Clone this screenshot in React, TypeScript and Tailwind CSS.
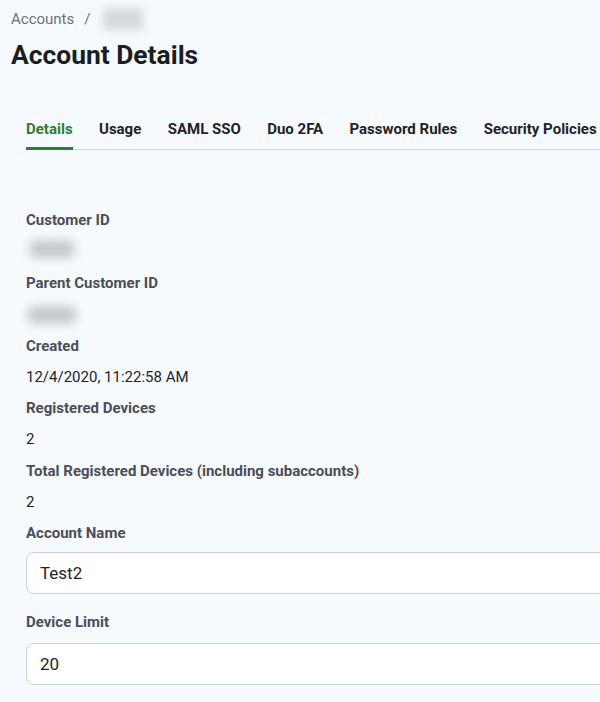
import React from "react";

const tabs = ["Details", "Usage", "SAML SSO", "Duo 2FA", "Password Rules", "Security Policies"];

const Blur = ({ w }: { w: string }) => (
  <div className={`${w} h-[28px] flex items-center justify-center`}>
    <div className="h-[18px] w-[85%] rounded-[6px] bg-[#c6c9cd] blur-[5px]" />
  </div>
);

const Label = ({ children }: { children: React.ReactNode }) => (
  <div className="h-[31.3px] flex items-center text-[15px] font-bold text-[#4a4f56]">{children}</div>
);

const Value = ({ children }: { children: React.ReactNode }) => (
  <div className="h-[31.3px] flex items-center text-[15px] text-[#212529]">{children}</div>
);

export default function App() {
  return (
    <div
      className="min-h-[702px] w-[600px] overflow-hidden bg-[#f6f9fe]"
      style={{ fontFamily: "Roboto, 'Noto Sans', sans-serif" }}
    >
      <div className="pl-[11px] pt-[6px]">
        <div className="flex items-center h-[26px] text-[15px] text-[#6c7278]">
          <span>Accounts</span>
          <span className="ml-[10px]">/</span>
          <div className="ml-[10px] w-[46px] h-[30px] flex items-center justify-center">
            <div className="h-[22px] w-[40px] bg-[#d6d9dd] blur-[4px]" />
          </div>
        </div>
        <h1 className="mt-[7px] text-[26.4px] font-bold leading-[32px] text-[#1b1e21]">Account Details</h1>
      </div>

      <div className="ml-[26px] mt-[49px] flex gap-[26.4px] border-b border-[#d3d6da] w-[600px]">
        {tabs.map((t, i) => (
          <div key={t} className="flex flex-col shrink-0">
            <span
              className={`text-[15px] font-bold leading-[18px] ${i === 0 ? "text-[#2e7d32]" : "text-[#1f2327]"}`}
            >
              {t}
            </span>
            <div className={`mt-[9px] h-[3px] -mb-px ${i === 0 ? "bg-[#2e7d32]" : "bg-transparent"}`} />
          </div>
        ))}
      </div>

      <div className="pl-[26px] pt-[55px]">
        <Label>Customer ID</Label>
        <div className="h-[31.3px] flex items-center -mt-[3px] mb-[3px]">
          <Blur w="w-[52px]" />
        </div>
        <Label>Parent Customer ID</Label>
        <div className="h-[31.3px] flex items-center -ml-[2px]">
          <Blur w="w-[56px]" />
        </div>
        <Label>Created</Label>
        <Value>12/4/2020, 11:22:58 AM</Value>
        <Label>Registered Devices</Label>
        <Value>2</Value>
        <Label>Total Registered Devices (including subaccounts)</Label>
        <Value>2</Value>
        <Label>Account Name</Label>
        <input
          readOnly
          value="Test2"
          className="mt-[3px] block h-[42px] w-[620px] rounded-[8px] border border-[#cdd0d4] bg-white px-[13px] text-[17px] text-[#212529] outline-none"
        />
        <div className="mt-[12px]">
          <Label>Device Limit</Label>
        </div>
        <input
          readOnly
          value="20"
          className="mt-[5px] block h-[42px] w-[620px] rounded-[8px] border border-[#cdd0d4] bg-white px-[13px] text-[17px] text-[#212529] outline-none"
        />
      </div>
    </div>
  );
}
